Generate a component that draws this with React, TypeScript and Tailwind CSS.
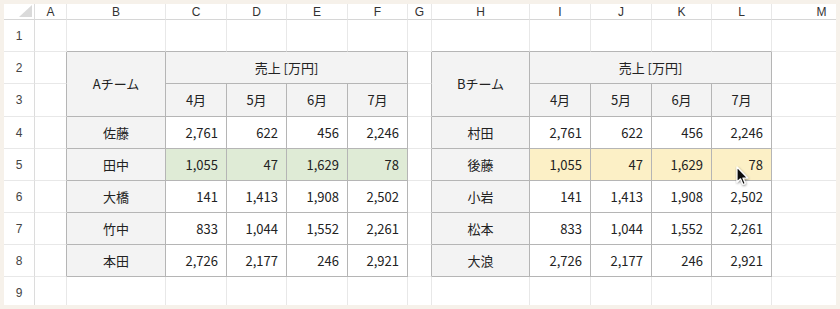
import React from 'react'

type Cell = {
  key: string
  text?: string
  col: number // 1 = A
  row: number
  colSpan?: number
  rowSpan?: number
  kind: 'blank' | 'head' | 'name' | 'num'
  hl?: 'green' | 'yellow'
}

const COL_LETTERS = ['A', 'B', 'C', 'D', 'E', 'F', 'G', 'H', 'I', 'J', 'K', 'L', 'M']

const tableA = { names: ['佐藤', '田中', '大橋', '竹中', '本田'], title: 'Aチーム', c0: 2 }
const tableB = { names: ['村田', '後藤', '小岩', '松本', '大浪'], title: 'Bチーム', c0: 8 }

const values = [
  ['2,761', '622', '456', '2,246'],
  ['1,055', '47', '1,629', '78'],
  ['141', '1,413', '1,908', '2,502'],
  ['833', '1,044', '1,552', '2,261'],
  ['2,726', '2,177', '246', '2,921'],
]

const months = ['4月', '5月', '6月', '7月']

// テーブル範囲 (列 B..F / H..L, 行 2..8)
const inTable = (c: number, r: number) =>
  r >= 2 && r <= 8 && ((c >= 2 && c <= 6) || (c >= 8 && c <= 12))

function buildRow(r: number): Cell[] {
  const cells: Cell[] = []
  for (let c = 1; c <= 13; c++) {
    const t = c >= 2 && c <= 6 ? tableA : c >= 8 && c <= 12 ? tableB : null
    if (!t || r < 2 || r > 8) {
      cells.push({ key: `${c}-${r}`, col: c, row: r, kind: 'blank' })
      continue
    }
    const off = c - t.c0
    if (r === 2) {
      if (off === 0) cells.push({ key: `${c}-${r}`, col: c, row: r, rowSpan: 2, kind: 'head', text: t.title })
      if (off === 1) cells.push({ key: `${c}-${r}`, col: c, row: r, colSpan: 4, kind: 'head', text: '売上 [万円]' })
      continue
    }
    if (r === 3) {
      if (off >= 1) cells.push({ key: `${c}-${r}`, col: c, row: r, kind: 'head', text: months[off - 1] })
      continue
    }
    if (off === 0) {
      cells.push({ key: `${c}-${r}`, col: c, row: r, kind: 'name', text: t.names[r - 4] })
    } else {
      cells.push({
        key: `${c}-${r}`,
        col: c,
        row: r,
        kind: 'num',
        text: values[r - 4][off - 1],
        hl: r === 5 ? (t === tableA ? 'green' : 'yellow') : undefined,
      })
    }
  }
  return cells
}

function SheetCell({ cell }: { cell: Cell }) {
  const lastCol = cell.col + (cell.colSpan ?? 1) - 1
  const lastRow = cell.row + (cell.rowSpan ?? 1) - 1
  const darkR = inTable(lastCol, cell.row) || inTable(lastCol + 1, cell.row)
  const darkB = inTable(cell.col, lastRow) || inTable(cell.col, lastRow + 1)

  const bg =
    cell.kind === 'head' || cell.kind === 'name'
      ? 'bg-[#f3f3f3]'
      : cell.hl === 'green'
        ? 'bg-[#dfebd6]'
        : cell.hl === 'yellow'
          ? 'bg-[#fcf0c6]'
          : 'bg-white'

  return (
    <div
      className={`flex items-center border-r border-b text-[13px] text-[#222] ${
        darkR ? 'border-r-[#b5b5b5]' : 'border-r-[#e8e8e8]'
      } ${darkB ? 'border-b-[#b5b5b5]' : 'border-b-[#e8e8e8]'} ${bg} ${
        cell.kind === 'num' ? 'justify-end pr-2' : 'justify-center'
      } ${cell.colSpan === 4 ? 'col-span-4' : ''} ${cell.rowSpan === 2 ? 'row-span-2' : ''}`}
    >
      {cell.text}
    </div>
  )
}

export default function App() {
  const rows = [1, 2, 3, 4, 5, 6, 7, 8, 9]

  return (
    <div
      className="w-[840px] h-[309px] bg-[#f6f1ea] p-[4px]"
      style={{ fontFamily: '"Noto Sans CJK JP", "Liberation Sans", sans-serif' }}
    >
      <div className="relative w-[832px] h-[301px] overflow-hidden bg-white">
        <div className="grid grid-cols-[31px_32px_99px_61px_60px_61px_60px_24px_98px_61px_61px_60px_60px_100px] grid-rows-[16px_32px_32px_33px_32px_32px_32px_32px_32px_32px]">
          {/* 列ヘッダー */}
          <div className="relative border-r border-b border-r-[#dcdcdc] border-b-[#d6d6d6] bg-white">
            <svg className="absolute right-[2px] bottom-[2px]" width="13" height="12" viewBox="0 0 13 12">
              <polygon points="13,0 13,12 0,12" fill="#dadada" />
            </svg>
          </div>
          {COL_LETTERS.map((l) => (
            <div
              key={l}
              className="flex items-center justify-center border-r border-b border-r-[#e8e8e8] border-b-[#d6d6d6] bg-white text-[12px] text-[#333]"
              style={{ fontFamily: '"Liberation Sans", sans-serif' }}
            >
              {l}
            </div>
          ))}

          {rows.map((r) => (
            <React.Fragment key={r}>
              <div
                className="flex items-center justify-center border-r border-b border-r-[#dcdcdc] border-b-[#e8e8e8] bg-white text-[12px] text-[#444]"
                style={{ fontFamily: '"Liberation Sans", sans-serif' }}
              >
                {r}
              </div>
              {buildRow(r).map((cell) => (
                <SheetCell key={cell.key} cell={cell} />
              ))}
            </React.Fragment>
          ))}
        </div>

        {/* マウスカーソル */}
        <svg
          className="absolute left-[731px] top-[162px]"
          width="16"
          height="22"
          viewBox="0 0 16 22"
        >
          <defs>
            <filter id="cs" x="-50%" y="-50%" width="200%" height="200%">
              <feDropShadow dx="0.5" dy="1" stdDeviation="0.8" floodOpacity="0.45" />
            </filter>
          </defs>
          <path
            d="M2 1 L2 16 L5.5 12.8 L8 18.5 L10.3 17.5 L7.9 12 L12.6 12 Z"
            fill="#111"
            stroke="#fff"
            strokeWidth="1.2"
            strokeLinejoin="round"
            filter="url(#cs)"
          />
        </svg>
      </div>
    </div>
  )
}
